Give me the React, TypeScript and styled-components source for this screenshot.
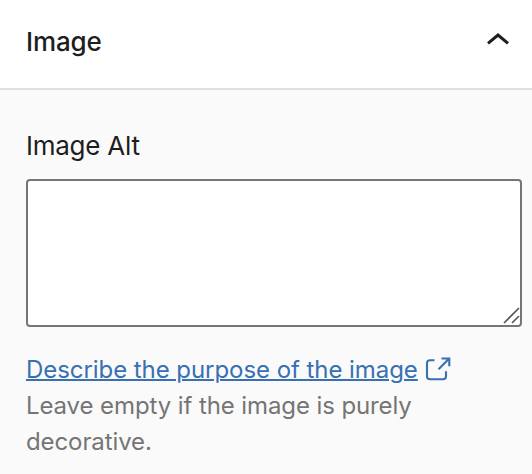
import React from "react";
import styled, { createGlobalStyle } from "styled-components";

const GlobalStyle = createGlobalStyle`
  * { box-sizing: border-box; }
  body { margin: 0; background: #fafafa; font-family: Inter, sans-serif; color: #1e1e1e; }
`;
const Panel = styled.section`
  width: 532px;
  height: 474px;
  overflow: hidden;
  background: #fafafa;
`;
const Header = styled.header`
  display: flex;
  align-items: flex-start;
  justify-content: space-between;
  height: 90px;
  padding: 24px 22px 0 26px;
  background: #fff;
  border-bottom: 2px solid #e0e0e0;
`;
const Title = styled.h2`
  margin: 0;
  font-size: 26px;
  line-height: 36px;
  font-weight: 500;
  letter-spacing: -0.15px;
`;
const Chevron = styled.svg`
  width: 24px;
  height: 14px;
  margin-top: 8px;
`;
const Body = styled.div`
  padding: 38px 10px 0 26px;
`;
const Label = styled.label`
  display: block;
  font-size: 26px;
  line-height: 36px;
  letter-spacing: -0.25px;
  margin-bottom: 15px;
`;
const Field = styled.div`
  display: flex;
  align-items: flex-end;
  justify-content: flex-end;
  height: 148px;
  border: 2px solid #757575;
  border-radius: 4px;
  background: #fff;
`;
const Grip = styled.svg`
  width: 18px;
  height: 18px;
`;
const Help = styled.p`
  margin: 25px 0 0;
  font-size: 24px;
  line-height: 36px;
  letter-spacing: -0.1px;
  color: #757575;
`;
const Link = styled.a`
  display: flex;
  align-items: center;
  gap: 7px;
  color: #3870b2;
  letter-spacing: -0.06px;
  text-decoration: none;
`;
const LinkText = styled.span`
  text-decoration: underline;
  text-decoration-thickness: 2px;
`;
const ExternalIcon = styled.svg`
  width: 26px;
  height: 26px;
  margin-bottom: 2px;
`;

export default function App() {
  return (
    <Panel>
      <GlobalStyle />
      <Header>
        <Title>Image</Title>
        <Chevron viewBox="0 0 24 14" fill="none" stroke="#1e1e1e" strokeWidth="3">
          <path d="M2 11.3 12 3l10 8.3" />
        </Chevron>
      </Header>
      <Body>
        <Label>Image Alt</Label>
        <Field>
          <Grip viewBox="0 0 18 18" stroke="#555" strokeWidth="1.6">
            <path d="M2 16 17 1M10 16l7-7" />
          </Grip>
        </Field>
        <Help>
          <Link href="#">
            <LinkText>Describe the purpose of the image</LinkText>
            <ExternalIcon viewBox="0 0 26 26" fill="none" stroke="currentColor" strokeWidth="2.1">
              <path d="M9.5 4.3H5Q2 4.3 2 7.3v13q0 3 3 3h13q3 0 3-3v-5M16.5 2.5h7.8v7.8M24 2.8 13.5 13.3" />
            </ExternalIcon>
          </Link>
          Leave empty if the image is purely<br />decorative.
        </Help>
      </Body>
    </Panel>
  );
}
